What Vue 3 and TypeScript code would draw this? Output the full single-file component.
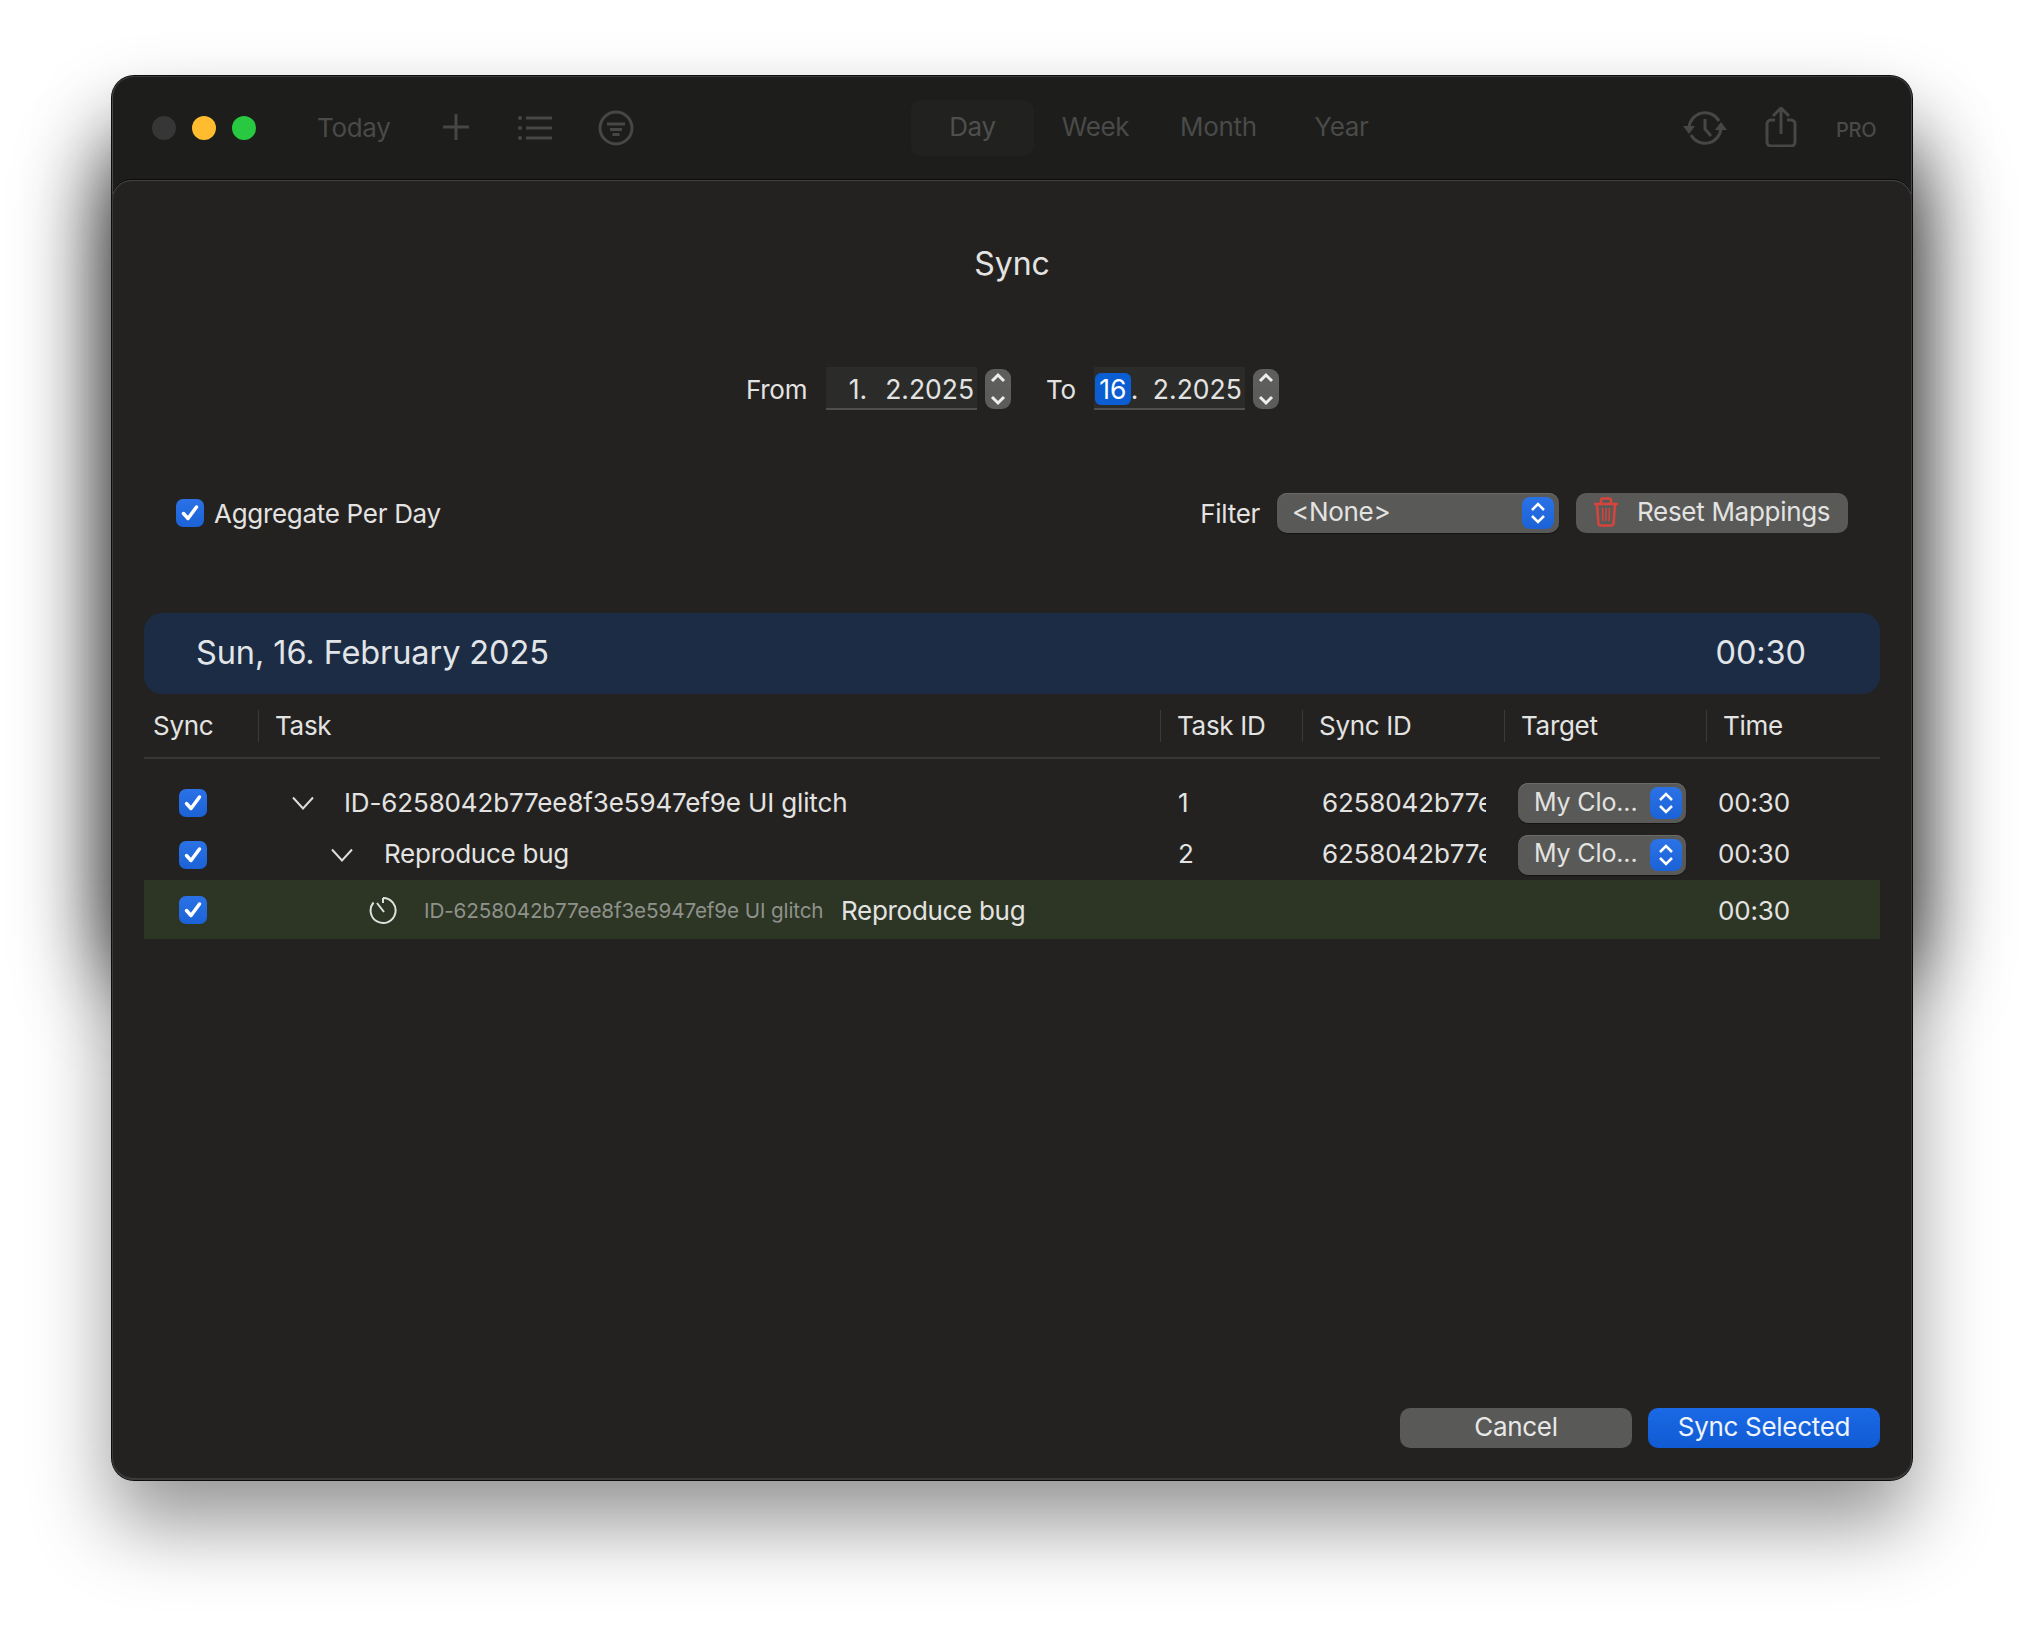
<script setup lang="ts">
const segments = ['Day', 'Week', 'Month', 'Year'];
const columns = ['Sync', 'Task', 'Task ID', 'Sync ID', 'Target', 'Time'];

const tasks = [
  { id: '1', level: 'lvl1', name: 'ID-6258042b77ee8f3e5947ef9e UI glitch' },
  { id: '2', level: 'lvl2', name: 'Reproduce bug' },
];
</script>

<template>
  <div class="page">
    <div class="window">
      <header class="toolbar">
        <div class="lights">
          <span class="light off"></span>
          <span class="light min"></span>
          <span class="light max"></span>
        </div>
        <div class="tool-btn today">Today</div>
        <svg class="ic plus" width="28" height="28" viewBox="0 0 28 28">
          <path d="M14 1v26M1 14h26" />
        </svg>
        <svg class="ic list" width="34" height="24" viewBox="0 0 34 24">
          <path d="M8 2h26M8 12h26M8 22h26" />
          <circle class="dot" cx="2" cy="2" r="2" />
          <circle class="dot" cx="2" cy="12" r="2" />
          <circle class="dot" cx="2" cy="22" r="2" />
        </svg>
        <svg class="ic filter" width="36" height="36" viewBox="0 0 36 36">
          <circle cx="18" cy="18" r="16" />
          <path d="M9 14h18M12 19.500h12M14.500 24.500h7" />
        </svg>
        <div class="segments">
          <div v-for="(s, i) in segments" :key="s" class="segment" :class="{ active: i === 0 }">{{ s }}</div>
        </div>
        <svg class="ic history" width="44" height="36" viewBox="0 0 44 36">
          <path d="M6 18A16 16 0 0 1 36 11M38 18A16 16 0 0 1 8 25" />
          <path d="M22 9v10l6 7" />
          <path class="fill" d="M0 16h12l-6 8zM32 20h12l-6-8z" />
        </svg>
        <svg class="ic share" width="32" height="40" viewBox="0 0 32 40">
          <path d="M10 13H6a4 4 0 0 0-4 4v18a4 4 0 0 0 4 4h20a4 4 0 0 0 4-4V17a4 4 0 0 0-4-4h-4" />
          <path d="M16 27V2M8 9l8-8 8 8" />
        </svg>
        <div class="pro">PRO</div>
      </header>

      <main class="sheet">
        <h1 class="title">Sync</h1>

        <div class="dates">
          <span class="label">From</span>
          <div class="date-field">
            <span>1.</span>
            <span>2.2025</span>
          </div>
          <div class="stepper">
            <svg width="18" height="12" viewBox="0 0 18 12"><path d="M3 9l6-6 6 6" /></svg>
            <svg width="18" height="12" viewBox="0 0 18 12"><path d="M3 3l6 6 6-6" /></svg>
          </div>
          <span class="label to">To</span>
          <div class="date-field second">
            <span class="d-sel">16</span><span class="d-dot">.</span>
            <span>2.2025</span>
          </div>
          <div class="stepper">
            <svg width="18" height="12" viewBox="0 0 18 12"><path d="M3 9l6-6 6 6" /></svg>
            <svg width="18" height="12" viewBox="0 0 18 12"><path d="M3 3l6 6 6-6" /></svg>
          </div>
        </div>

        <div class="options">
          <label class="aggregate">
            <span class="check">
              <svg width="20" height="20" viewBox="0 0 20 20"><path d="M3.500 10.500l4.500 5L16.500 4" /></svg>
            </span>
            Aggregate Per Day
          </label>
          <span class="filter-label">Filter</span>
          <div class="popup wide">
            <span>&lt;None&gt;</span>
            <span class="popup-arrows">
              <svg width="18" height="26" viewBox="0 0 18 26"><path d="M3 10l6-6 6 6M3 16l6 6 6-6" /></svg>
            </span>
          </div>
          <div class="reset">
            <svg class="trash" width="26" height="30" viewBox="0 0 26 30">
              <path d="M1 7h24M8 7V3.500A2 2 0 0 1 10 1.500h6a2 2 0 0 1 2 2V7" />
              <path d="M4 7l1.500 20a2 2 0 0 0 2 1.500h11a2 2 0 0 0 2-1.500L22 7" />
              <path class="thin" d="M9.500 11l.5 13M13 11v13M16.500 11l-.5 13" />
            </svg>
            <span class="reset-text">Reset Mappings</span>
          </div>
        </div>

        <div class="banner">
          <span>Sun, 16. February 2025</span>
          <span>00:30</span>
        </div>

        <div class="table">
          <div class="head">
            <div v-for="(c, i) in columns" :key="c" class="th" :class="{ first: i === 0 }">{{ c }}</div>
          </div>

          <div class="rows">
            <div v-for="t in tasks" :key="t.id" class="row">
              <div class="td-check">
                <span class="check">
                  <svg width="20" height="20" viewBox="0 0 20 20"><path d="M3.500 10.500l4.500 5L16.500 4" /></svg>
                </span>
              </div>
              <div class="td-task" :class="t.level">
                <svg class="chevron" width="24" height="14" viewBox="0 0 24 14"><path d="M2 1.500l10 11 10-11" /></svg>
                <span>{{ t.name }}</span>
              </div>
              <div class="td-id">{{ t.id }}</div>
              <div class="td-sync"><span class="clip">6258042b77ee8f3e5947ef9e</span></div>
              <div class="td-target">
                <div class="popup small">
                  <span>My Clo...</span>
                  <span class="popup-arrows">
                    <svg width="18" height="26" viewBox="0 0 18 26"><path d="M3 10l6-6 6 6M3 16l6 6 6-6" /></svg>
                  </span>
                </div>
              </div>
              <div class="td-time">00:30</div>
            </div>

            <div class="row entry">
              <div class="td-check">
                <span class="check">
                  <svg width="20" height="20" viewBox="0 0 20 20"><path d="M3.500 10.500l4.500 5L16.500 4" /></svg>
                </span>
              </div>
              <div class="td-entry">
                <svg class="timer" width="28" height="30" viewBox="0 0 28 30">
                  <path d="M14 3a12.500 12.500 0 1 1-9.500 4.500" />
                  <path d="M14 3v5M8 8l7 9" />
                </svg>
                <span class="entry-parent">ID-6258042b77ee8f3e5947ef9e UI glitch</span>
                <span class="entry-name">Reproduce bug</span>
              </div>
              <div class="td-time">00:30</div>
            </div>
          </div>
        </div>

        <footer class="actions">
          <button class="btn">Cancel</button>
          <button class="btn primary">Sync Selected</button>
        </footer>
      </main>
    </div>
  </div>
</template>

<style scoped>
.page {
  position: relative;
  z-index: 0;
  width: 2024px;
  height: 1628px;
  padding: 76px 112px 148px;
  box-sizing: border-box;
  overflow: hidden;
  background: #fff;
  font-family: Inter, "Liberation Sans", sans-serif;
  font-size: 26px;
  letter-spacing: -0.3px;
  color: #e3e3e1;
}

.window {
  position: relative;
  height: 100%;
  display: flex;
  flex-direction: column;
  border-radius: 22px;
  background: #1d1d1c;
  box-shadow: 0 0 0 1px #0c0c0c, inset 0 1px 0 #3a3a3a, inset 1px 0 0 #4a4a4a, inset -1px 0 0 #4a4a4a, 0 44px 80px rgba(0, 0, 0, 0.42);
}

/* the dark shadow of the window behind the sheet */
.window::before {
  content: '';
  position: absolute;
  z-index: -1;
  top: 90px;
  left: 0;
  right: 0;
  height: 810px;
  border-radius: 22px;
  box-shadow: 0 0 90px rgba(0, 0, 0, 0.85);
}

.toolbar {
  height: 104px;
  flex-shrink: 0;
  display: flex;
  align-items: center;
  padding-left: 40px;
  box-sizing: border-box;
  color: #4a4a49;
}

.lights {
  display: flex;
  gap: 16px;
}

.light {
  width: 24px;
  height: 24px;
  border-radius: 50%;
}

.light.off { background: #363636; }
.light.min { background: #febc2e; }
.light.max { background: #28c840; }

.tool-btn.today {
  margin-left: 61px;
  margin-top: -2px;
  width: 72px;
}

.ic {
  flex-shrink: 0;
  fill: none;
  stroke: #474746;
  stroke-width: 3;
}

.ic .dot,
.ic .fill {
  fill: #474746;
  stroke: none;
}

.plus { margin-left: 53px; margin-top: -2px; }
.list { margin-left: 48px; }
.filter { margin-left: 46px; }
.history { margin-left: 1049px; }
.share { margin-left: 38px; margin-top: -2px; }

.segments {
  position: absolute;
  display: flex;
  left: 799px;
  top: 24px;
}

.segment {
  width: 123px;
  height: 56px;
  line-height: 54px;
  text-align: center;
  border-radius: 10px;
}

.segment.active {
  background: #212120;
  color: #4f4f4e;
}

.pro {
  margin-left: 39px;
  font-size: 20px;
  font-weight: 500;
  margin-top: 4px;
}

.sheet {
  flex: 1;
  min-height: 0;
  display: flex;
  flex-direction: column;
  box-sizing: border-box;
  background: #232221;
  border-radius: 20px 20px 22px 22px;
  box-shadow: 0 -1px 0 #0c0c0c, inset 0 1px 0 #444342, inset 1px 0 0 #3c3b3a, inset -1px 0 0 #3c3b3a, inset 0 -2px 0 #3a3a39;
  padding: 64px 32px 32px;
}

.title {
  margin: 0;
  height: 40px;
  line-height: 40px;
  text-align: center;
  font-size: 32px;
  font-weight: 400;
  letter-spacing: 0;
}

.dates {
  margin-top: 83px;
  height: 43px;
  display: flex;
  align-items: center;
  padding-left: 602px;
}

.label {
  padding-top: 2px;
}

.date-field {
  margin-left: 19px;
  width: 151px;
  height: 43px;
  box-sizing: border-box;
  display: flex;
  align-items: center;
  justify-content: flex-end;
  padding: 2px 3px 0 0;
  gap: 18px;
  font-size: 26.500px;
  letter-spacing: 0;
  background: #2b2b2a;
  border-bottom: 2px solid #4f4f4e;
}

.date-field.second {
  margin-left: 18px;
  justify-content: flex-start;
  padding: 2px 0 0 1px;
  gap: 0;
}

.d-sel {
  height: 32px;
  width: 36px;
  line-height: 32px;
  text-align: center;
  border-radius: 6px;
  background: #0b5ed1;
  color: #fff;
}

.d-dot {
  width: 22px;
}

.stepper {
  margin-left: 8px;
  width: 26px;
  height: 40px;
  display: flex;
  flex-direction: column;
  align-items: center;
  justify-content: space-between;
  padding: 3px 0;
  box-sizing: border-box;
  border-radius: 9px;
  background: linear-gradient(#5e5e5d 49%, #484847 50%, #5c5c5b 51%);
}

.stepper svg {
  fill: none;
  stroke: #eee;
  stroke-width: 3;
}

.label.to {
  margin-left: 35px;
}

.options {
  margin-top: 83px;
  height: 40px;
  display: flex;
  align-items: center;
  padding-left: 32px;
}

.aggregate {
  display: flex;
  align-items: center;
  gap: 10px;
}

.check {
  width: 28px;
  height: 28px;
  flex-shrink: 0;
  display: flex;
  align-items: center;
  justify-content: center;
  border-radius: 7px;
  background: linear-gradient(#2a72e6, #1a62d6);
}

.check svg {
  fill: none;
  stroke: #fff;
  stroke-width: 3.500;
  stroke-linecap: round;
  stroke-linejoin: round;
}

.filter-label {
  margin-left: auto;
}

.popup {
  display: flex;
  align-items: center;
  justify-content: space-between;
  box-sizing: border-box;
  height: 40px;
  border-radius: 10px;
  background: #595958;
  box-shadow: inset 0 1px 0 #6a6a69, 0 1px 1px rgba(0, 0, 0, 0.4);
}

.popup > span:first-child {
  margin-top: -3px;
}

.popup.wide {
  margin-left: 17px;
  width: 282px;
  padding: 0 5px 0 15px;
}

.popup.small {
  width: 168px;
  padding: 0 4px 0 16px;
  font-size: 25px;
}

.popup-arrows {
  width: 32px;
  height: 32px;
  display: flex;
  align-items: center;
  justify-content: center;
  border-radius: 8px;
  background: linear-gradient(#2a72e6, #1a62d6);
}

.popup-arrows svg {
  fill: none;
  stroke: #fff;
  stroke-width: 2.500;
}

.reset {
  margin-left: 17px;
  margin-right: 32px;
  width: 272px;
  height: 40px;
  display: flex;
  align-items: center;
  gap: 18px;
  padding-left: 17px;
  box-sizing: border-box;
  border-radius: 10px;
  background: #595958;
}

.reset-text {
  margin-top: -3px;
}

.trash {
  fill: none;
  stroke: #d8443b;
  stroke-width: 2.500;
  flex-shrink: 0;
  margin-top: -2px;
}

.trash .thin {
  stroke-width: 1.500;
}

.banner {
  margin-top: 80px;
  height: 81px;
  display: flex;
  align-items: center;
  justify-content: space-between;
  padding: 0 74px 2px 52px;
  box-sizing: border-box;
  border-radius: 18px;
  background: #1c2c44;
  font-size: 32.500px;
  letter-spacing: -0.1px;
  color: #e2e5e8;
}

.table {
  --cols: 114px 902px 142px 202px 202px 174px;
}

.head,
.row {
  display: grid;
  grid-template-columns: var(--cols);
  align-items: center;
}

.head {
  height: 65px;
  border-bottom: 2px solid #373736;
  box-sizing: border-box;
  padding-top: 1px;
}

.th {
  height: 32px;
  line-height: 32px;
  padding-left: 16px;
  border-left: 1px solid #3a3a39;
}

.th.first {
  padding-left: 9px;
  border-left: 0;
}

.rows {
  padding-top: 18px;
}

.row {
  height: 52px;
  letter-spacing: -0.14px;
}

.row:nth-child(2) {
  height: 51px;
}

.row.entry {
  height: 59px;
  grid-template-columns: 114px 1448px 174px;
  background: #2d3525;
}

.td-check {
  padding-left: 35px;
}

.td-task {
  display: flex;
  align-items: center;
  gap: 29px;
  padding-bottom: 2px;
}

.td-task.lvl1 { padding-left: 33px; }
.td-task.lvl2 { padding-left: 72px; gap: 30px; letter-spacing: -0.25px; }

.chevron {
  flex-shrink: 0;
  fill: none;
  stroke: #dcdcda;
  stroke-width: 2;
  margin-top: 2px;
}

.td-id {
  padding: 0 0 2px 18px;
}

.td-sync {
  padding: 0 0 2px 20px;
}

.clip {
  display: block;
  width: 164px;
  overflow: hidden;
  white-space: nowrap;
}

.td-target {
  padding-left: 14px;
}

.td-time {
  padding: 0 0 2px 12px;
}

.row.entry .td-time {
  padding: 1px 0 0 12px;
}

.td-entry {
  display: flex;
  align-items: center;
  padding: 1px 0 0 111px;
}

.timer {
  flex-shrink: 0;
  fill: none;
  stroke: #dfe2dc;
  stroke-width: 2;
  margin-right: 27px;
}

.entry-parent {
  width: 417px;
  font-size: 20.700px;
  color: #8f928b;
}

.entry-name {
  letter-spacing: -0.3px;
}

.actions {
  margin-top: auto;
  display: flex;
  justify-content: flex-end;
  gap: 16px;
}

.btn {
  width: 232px;
  height: 40px;
  padding: 0 0 3px;
  border: 0;
  border-radius: 10px;
  background: #595958;
  color: #e8e8e6;
  font: inherit;
  letter-spacing: inherit;
}

.btn.primary {
  background: linear-gradient(#1b69e6, #105bd3);
  color: #eef3fc;
}
</style>
